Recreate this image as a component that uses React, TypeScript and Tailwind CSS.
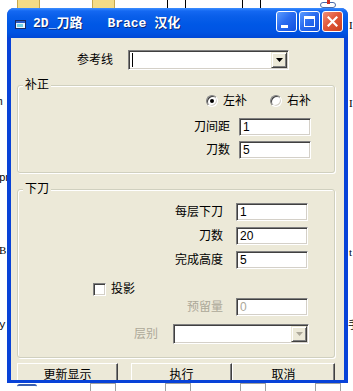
import React from "react";

const sunken =
  "border border-t-[#808080] border-l-[#808080] border-b-white border-r-white shadow-[inset_1px_1px_0_#404040,inset_-1px_-1px_0_#d4d0c8]";

function Field({ value, disabled }: { value: string; disabled?: boolean }) {
  return (
    <div
      className={`w-[72px] h-[18px] bg-white ${sunken} pl-[3px] flex items-center text-[12px] leading-none ${
        disabled ? "text-[#ACA899]" : "text-black"
      }`}
    >
      {value}
    </div>
  );
}

function DropBtn({ disabled }: { disabled?: boolean }) {
  return (
    <div className="w-[16px] h-[16px] bg-[#ECE9D8] border border-t-[#ECE9D8] border-l-[#ECE9D8] border-b-[#404040] border-r-[#404040] shadow-[inset_1px_1px_0_#ffffff,inset_-1px_-1px_0_#808080] flex items-center justify-center">
      <svg width="7" height="4" viewBox="0 0 7 4">
        <polygon points="0,0 7,0 3.5,4" fill={disabled ? "#ACA899" : "#000"} />
      </svg>
    </div>
  );
}

function Combo({ w, caret, disabled }: { w: string; caret?: boolean; disabled?: boolean }) {
  return (
    <div className={`${w} h-[20px] bg-white ${sunken} flex items-center justify-between pl-[2px] pr-[1px]`}>
      {caret ? <div className="w-px h-[14px] bg-black ml-[1px]" /> : <div />}
      <DropBtn disabled={disabled} />
    </div>
  );
}

function Radio({ checked }: { checked?: boolean }) {
  return (
    <div className="w-[12px] h-[12px] rounded-full border border-t-[#808080] border-l-[#808080] border-b-white border-r-white bg-white shadow-[inset_1px_1px_0_#404040,inset_-1px_-1px_0_#d4d0c8] flex items-center justify-center">
      {checked && <div className="w-[4px] h-[4px] rounded-full bg-black" />}
    </div>
  );
}

function Group({ title, h, children }: { title: string; h: string; children: React.ReactNode }) {
  return (
    <div className={`relative ml-[6px] w-[318px] ${h} border border-[#D0D0BF] rounded-[3px] shadow-[1px_1px_0_#ffffff,inset_1px_1px_0_#ffffff]`}>
      <div className="absolute -top-[8px] left-[5px] px-[2px] bg-[#ECE9D8] text-[12px] leading-[14px] text-black">
        {title}
      </div>
      {children}
    </div>
  );
}

function Button({ label, w }: { label: string; w: string }) {
  return (
    <div
      className={`${w} h-[23px] bg-[#ECE9D8] border border-t-white border-l-white border-b-[#404040] border-r-[#404040] shadow-[inset_-1px_-1px_0_#808080] flex items-start justify-center pt-[4px] text-[12px] leading-[14px] text-black`}
    >
      {label}
    </div>
  );
}

export default function App() {
  return (
    <div className="relative w-[353px] h-[391px] bg-white overflow-hidden font-['Liberation_Sans','Noto_Sans_CJK_SC',sans-serif]">
      {/* desktop fragments */}
      <div className="absolute left-[17px] top-0 w-[23px] h-[9px] bg-[#F4DC86] border-x border-[#C9A84A]" />
      <div className="absolute left-[92px] top-0 w-[23px] h-[9px] bg-[#F4DC86] border-x border-[#C9A84A]" />
      <div className="absolute left-[167px] top-0 w-px h-[9px] bg-black" />
      <div className="absolute left-[185px] top-0 w-px h-[9px] bg-black" />
      <div className="absolute left-[242px] top-0 w-px h-[9px] bg-black" />
      <div className="absolute left-[260px] top-0 w-px h-[9px] bg-black" />
      <div className="absolute left-[320px] top-[2px] w-[16px] h-[6px] rounded-full border border-[#4A6AA8]" />
      <div className="absolute left-[327px] top-0 w-[3px] h-[4px] bg-[#D03020]" />
      <div className="absolute left-0 top-[96px] text-[11px] leading-[12px] font-['Liberation_Mono',monospace] -ml-[4px]">m</div>
      <div className="absolute left-0 top-[172px] text-[11px] leading-[12px] font-['Liberation_Mono',monospace] -ml-[1px]">pm</div>
      <div className="absolute left-0 top-[244px] text-[11px] leading-[12px] font-['Liberation_Serif',serif] -ml-[1px]">B</div>
      <div className="absolute left-0 top-[319px] text-[11px] leading-[12px] font-['Liberation_Mono',monospace] -ml-[1px]">y</div>
      <div className="absolute left-[349px] top-[19px] text-[11px] leading-[12px] font-['Liberation_Serif',serif]">I</div>
      <div className="absolute left-[349px] top-[97px] text-[11px] leading-[12px] font-['Liberation_Serif',serif]">I</div>
      <div className="absolute left-[349px] top-[246px] text-[11px] leading-[12px] font-['Liberation_Serif',serif]">t</div>
      <div className="absolute left-[348px] top-[319px] text-[11px] leading-[12px]">手</div>
      <div className="absolute left-[17px] top-[384px] w-[20px] h-[5px] rounded-full border-t-2 border-[#3A5FB0]" />
      <div className="absolute left-[90px] top-[383px] w-[26px] h-[9px] border border-[#A0A0A0]" />
      <div className="absolute left-[165px] top-[383px] w-[26px] h-[9px] border border-[#A0A0A0]" />
      <div className="absolute left-[240px] top-[383px] w-[26px] h-[9px] border border-[#A0A0A0]" />
      <div className="absolute left-[315px] top-[383px] w-[26px] h-[9px] border border-[#A0A0A0]" />

      {/* window */}
      <div className="absolute left-[7px] top-[8px] w-[341px] flex flex-col rounded-t-[7px] overflow-hidden bg-[#0842D8]">
        {/* title bar */}
        <div className="relative h-[30px] flex items-center bg-[linear-gradient(to_bottom,#3C8EFF_0px,#1468F2_3px,#0A5FEA_8px,#0058E6_16px,#0054E3_24px,#0048D6_30px)]">
          <svg className="ml-[8px] mt-[2px]" width="11" height="9" viewBox="0 0 11 9">
            <rect x="0.5" y="0.5" width="10" height="8" fill="#E8F4FF" stroke="#1A2A60" />
            <rect x="1" y="1" width="9" height="2" fill="#2A5CC8" />
            <rect x="2" y="4" width="6" height="3" fill="#6FD0E8" />
          </svg>
          <div className="ml-[7px] mt-[2px] flex text-white font-bold text-[13px] leading-[16px] whitespace-pre font-['Liberation_Mono','Noto_Sans_CJK_SC',monospace] [text-shadow:1px_1px_0_#0A2A7A]">
            <span>2D_刀路</span>
            <span className="ml-[25px]">Brace 汉化</span>
          </div>
          <div className="ml-auto mr-[5px] mt-[-3px] flex gap-[2px]">
            <div className="w-[21px] h-[21px] rounded-[3px] border border-white bg-[linear-gradient(135deg,#5C9CFF_0%,#2A6CF0_45%,#1050E0_100%)] relative">
              <div className="absolute left-[4px] top-[13px] w-[7px] h-[3px] bg-white" />
            </div>
            <div className="w-[21px] h-[21px] rounded-[3px] border border-white bg-[linear-gradient(135deg,#5C9CFF_0%,#2A6CF0_45%,#1050E0_100%)] flex items-center justify-center">
              <div className="w-[11px] h-[11px] border border-white border-t-[3px]" />
            </div>
            <div className="w-[21px] h-[21px] rounded-[3px] border border-white bg-[linear-gradient(135deg,#F0907A_0%,#E2573A_45%,#C8401E_100%)] flex items-center justify-center">
              <svg width="11" height="11" viewBox="0 0 11 11">
                <path d="M1.5 1.5 L9.5 9.5 M9.5 1.5 L1.5 9.5" stroke="#fff" strokeWidth="2.2" strokeLinecap="square" />
              </svg>
            </div>
          </div>
        </div>

        {/* client */}
        <div className="mx-[4px] mb-[3px] h-[342px] overflow-hidden bg-[#ECE9D8] flex flex-col text-[12px] text-black">
          {/* 参考线 */}
          <div className="mt-[12px] flex items-center h-[20px]">
            <div className="w-[102px] text-right leading-[14px]">参考线</div>
            <div className="ml-[15px]">
              <Combo w="w-[161px]" caret />
            </div>
          </div>

          {/* 补正 */}
          <div className="mt-[15px]">
            <Group title="补正" h="h-[88px]">
              <div className="mt-[8px] h-[13px] flex items-center pl-[188px]">
                <Radio checked />
                <span className="ml-[5px] leading-[14px]">左补</span>
                <div className="ml-[23px]">
                  <Radio />
                </div>
                <span className="ml-[5px] leading-[14px]">右补</span>
              </div>
              <div className="mt-[11px] flex items-center">
                <div className="w-[212px] text-right leading-[14px]">刀间距</div>
                <div className="ml-[9px]">
                  <Field value="1" />
                </div>
              </div>
              <div className="mt-[5px] flex items-center">
                <div className="w-[212px] text-right leading-[14px]">刀数</div>
                <div className="ml-[9px]">
                  <Field value="5" />
                </div>
              </div>
            </Group>
          </div>

          {/* 下刀 */}
          <div className="mt-[16px]">
            <Group title="下刀" h="h-[169px]">
              <div className="mt-[13px] flex items-center">
                <div className="w-[205px] text-right leading-[14px]">每层下刀</div>
                <div className="ml-[13px]">
                  <Field value="1" />
                </div>
              </div>
              <div className="mt-[6px] flex items-center">
                <div className="w-[205px] text-right leading-[14px]">刀数</div>
                <div className="ml-[13px]">
                  <Field value="20" />
                </div>
              </div>
              <div className="mt-[6px] flex items-center">
                <div className="w-[205px] text-right leading-[14px]">完成高度</div>
                <div className="ml-[13px]">
                  <Field value="5" />
                </div>
              </div>
              <div className="mt-[13px] flex items-center pl-[75px]">
                <div className={`w-[13px] h-[13px] bg-white ${sunken}`} />
                <span className="ml-[5px] leading-[14px]">投影</span>
              </div>
              <div className="mt-[2px] flex items-center">
                <div className="w-[205px] text-right leading-[14px] text-[#ACA899]">预留量</div>
                <div className="ml-[13px]">
                  <Field value="0" disabled />
                </div>
              </div>
              <div className="mt-[8px] flex items-center">
                <div className="w-[140px] text-right leading-[14px] text-[#ACA899]">层别</div>
                <div className="ml-[15px]">
                  <Combo w="w-[136px]" disabled />
                </div>
              </div>
            </Group>
          </div>

          {/* buttons */}
          <div className="mt-[5px] flex">
            <div className="ml-[6px]">
              <Button label="更新显示" w="w-[101px]" />
            </div>
            <div className="ml-[13px]">
              <Button label="执行" w="w-[101px]" />
            </div>
            <Button label="取消" w="w-[103px]" />
          </div>
        </div>
      </div>
    </div>
  );
}
